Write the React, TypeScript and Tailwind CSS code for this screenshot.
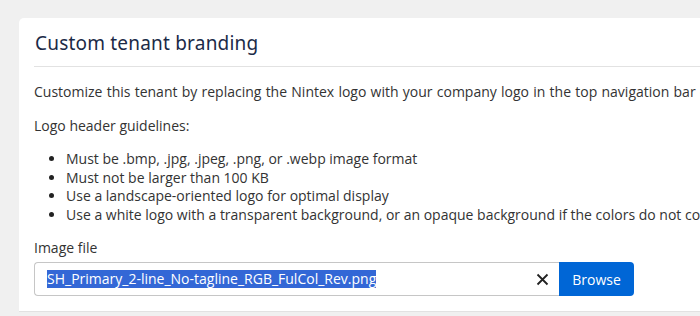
import React from 'react'

const RULES = [
  'Must be .bmp, .jpg, .jpeg, .png, or .webp image format',
  'Must not be larger than 100 KB',
  'Use a landscape-oriented logo for optimal display',
  'Use a white logo with a transparent background, or an opaque background if the colors do not conflict with the navigation bar',
]

export default function App() {
  return (
    <div className="h-[316px] w-[700px] overflow-hidden bg-[#f0f0f0] pl-[19px] pt-[18px] font-['Open_Sans',sans-serif] text-[14px] text-[#333]">
      <div className="w-[760px] rounded-tl-[5px] bg-white">
        {/* header */}
        <div className="mx-[15px] border-b border-[#e2e2e2] pb-[11px] pt-[13px]">
          <h2 className="pl-px text-[19px] leading-[24px] tracking-[0.2px] text-[#1b2a47] font-['Noto_Sans',sans-serif]">
            Custom tenant branding
          </h2>
        </div>

        {/* body */}
        <div className="whitespace-nowrap border-b border-[#e2e2e2] px-[15px] pb-[15px] pt-[15px]">
          <p className="leading-[20px] [word-spacing:0.6px]">
            Customize this tenant by replacing the Nintex logo with your company logo in the top navigation bar of the application.
          </p>
          <p className="mt-[14px] leading-[20px]">Logo header guidelines:</p>
          <ul className="mt-[14px] list-disc pl-[32px] leading-[18.5px] marker:text-[#222]">
            {RULES.map(r => (
              <li key={r}>{r}</li>
            ))}
          </ul>

          <label className="mt-[14px] block leading-[20px]">Image file</label>
          <div className="mt-[4px] flex h-[34px] w-[600px]">
            <div className="flex w-[525px] items-center rounded-l-[4px] border border-r-0 border-[#c6c6c6] pl-[12px] pr-[10px]">
              <span className="bg-[#3367d6] leading-[18px] text-white">
                SH_Primary_2-line_No-tagline_RGB_FulCol_Rev.png
              </span>
              <svg className="ml-auto" width="13" height="13" viewBox="0 0 13 13">
                <path d="M1.5 1.5 L11.5 11.5 M11.5 1.5 L1.5 11.5" stroke="#222" strokeWidth="1.8" />
              </svg>
            </div>
            <button className="w-[75px] rounded-r-[4px] bg-[#0066d6] text-[14px] text-white">
              Browse
            </button>
          </div>
        </div>
      </div>
    </div>
  )
}
